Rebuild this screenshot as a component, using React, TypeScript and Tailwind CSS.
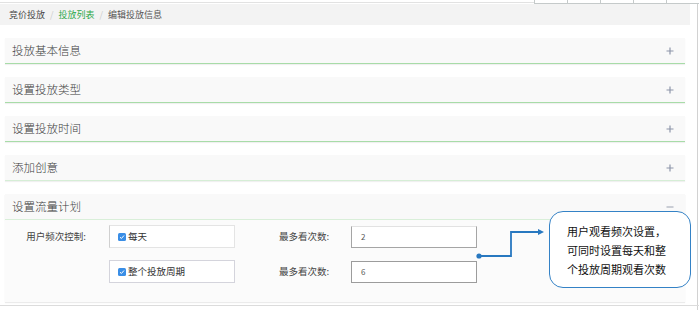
import React from 'react';

const FONT = "font-['Noto_Sans_CJK_SC','Noto_Sans',sans-serif]";

const Plus: React.FC = () => (
  <svg width="8" height="8" viewBox="0 0 8 8" className="shrink-0">
    <path d="M4 0.5V7.5M0.5 4H7.5" stroke="#8e96aa" strokeWidth="1.2" />
  </svg>
);

const Minus: React.FC = () => (
  <svg width="8" height="8" viewBox="0 0 8 8" className="shrink-0">
    <path d="M0.5 4H7.5" stroke="#9aa1b0" strokeWidth="1" />
  </svg>
);

const Check: React.FC = () => (
  <span className="w-[8px] h-[8px] rounded-[1.5px] bg-[#3a8ee6] flex items-center justify-center shrink-0">
    <svg width="6" height="6" viewBox="0 0 6 6">
      <path d="M1 3.2L2.4 4.5L5 1.5" stroke="#fff" strokeWidth="1" fill="none" />
    </svg>
  </span>
);

interface PanelHeaderProps {
  title: string;
  line: string;
  open?: boolean;
}

const PanelHeader: React.FC<PanelHeaderProps> = ({ title, line, open }) => (
  <div className={`h-[26px] bg-[#f9f9f9] border-b ${line} flex items-center justify-between pl-[7px] pr-[11px] shadow-[0_1px_1px_rgba(0,0,0,0.06)]`}>
    <span className="text-[11.5px] text-[#3c3c3c] font-light leading-none">{title}</span>
    {open ? <Minus /> : <Plus />}
  </div>
);

interface RowProps {
  label?: string;
  option: string;
  value: string;
  inputBorder: string;
  boxBorder: string;
}

const Row: React.FC<RowProps> = ({ label, option, value, inputBorder, boxBorder }) => (
  <div className="flex items-center h-[23px]">
    <div className="w-[81px] text-right text-[9.5px] text-[#444]">{label}</div>
    <div className={`ml-[23px] w-[126px] h-[23px] bg-white border ${boxBorder} flex items-center gap-[2px] pl-[8px]`}>
      <Check />
      <span className="text-[9.5px] text-[#333]">{option}</span>
    </div>
    <div className="ml-[44px] w-[72px] text-[9.5px] text-[#444]">最多看次数:</div>
    <div className={`w-[126px] h-[22px] bg-white border ${inputBorder} flex items-center pl-[9px] text-[8px] text-[#555]`}>
      {value}
    </div>
  </div>
);

export default function App() {
  return (
    <div className={`relative w-[699px] h-[310px] bg-white overflow-hidden ${FONT}`}>
      {/* top strip */}
      <div className="flex h-[4px]">
        <div className="w-[535px] h-[3px] border-b border-[#e2e2e2]" />
        <div className="flex-1 flex border-b border-[#c5caca]">
          {[0, 1, 2, 3, 4].map((i) => (
            <div key={i} className="w-[33px] border-l border-[#c5caca]" />
          ))}
        </div>
      </div>

      <div className="flex">
        <div className="w-[698px] border-r border-[#d2d2d2] h-[306px]">
          {/* breadcrumb */}
          <div className="mr-[7px] h-[21px] bg-[#f3f3f3] flex items-center pl-[9px] text-[9px] leading-none">
            <span className="text-[#444]">竞价投放</span>
            <span className="mx-[5px] text-[#ccc]">/</span>
            <span className="text-[#2ea84a]">投放列表</span>
            <span className="mx-[5px] text-[#ccc]">/</span>
            <span className="text-[#555]">编辑投放信息</span>
          </div>

          <div className="ml-[5px] w-[680px] pt-[13px] flex flex-col gap-[13px]">
            <PanelHeader title="投放基本信息" line="border-[#a8dca8]" />
            <PanelHeader title="设置投放类型" line="border-[#a8dca8]" />
            <PanelHeader title="设置投放时间" line="border-[#a8dca8]" />
            <PanelHeader title="添加创意" line="border-[#d6eed6]" />
            <div className="shadow-[0_1px_1px_rgba(0,0,0,0.08)]">
              <PanelHeader title="设置流量计划" line="border-[#d9efd9]" open />
              <div className="bg-[#fbfbfb] h-[82px] pt-[5px] flex flex-col gap-[12px]">
                <Row
                  label="用户频次控制:"
                  option="每天"
                  value="2"
                  boxBorder="border-[#e4e4e4] border-l-[#d0d0d0]"
                  inputBorder="border-[#a5a5a5] border-t-[#e2e2e2]"
                />
                <Row
                  option="整个投放周期"
                  value="6"
                  boxBorder="border-[#d4d4dc]"
                  inputBorder="border-[#9c9c9c]"
                />
              </div>
            </div>
          </div>
        </div>
      </div>
      <div className="absolute left-0 top-[305px] w-[699px] border-t border-[#dcdcdc]" />

      {/* annotation */}
      <svg className="absolute left-[474px] top-[226px]" width="76" height="36" viewBox="0 0 76 36">
        <circle cx="5" cy="30" r="2.6" fill="#2878c0" />
        <path d="M5 30H37V6H65" stroke="#2878c0" strokeWidth="1.8" fill="none" />
        <path d="M64 3L70 6L64 9Z" fill="#2878c0" />
      </svg>
      <div className="absolute left-[549px] top-[211px] w-[142px] h-[77px] rounded-[14px] border border-[#3482c6] bg-white pt-[10px] pl-[17px] text-[11px] leading-[19px] text-[#111]">
        <div>用户观看频次设置，</div>
        <div>可同时设置每天和整</div>
        <div>个投放周期观看次数</div>
      </div>
    </div>
  );
}
